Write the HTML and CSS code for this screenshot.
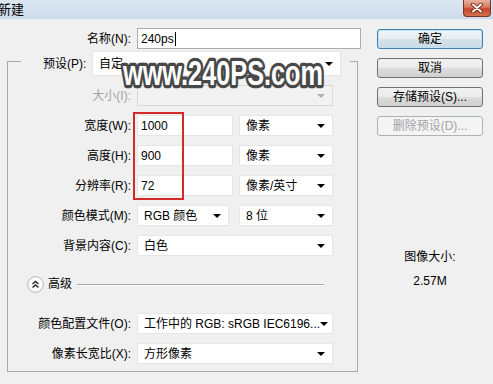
FILE: index.html
```html
<!DOCTYPE html>
<html lang="zh">
<head>
<meta charset="utf-8">
<title>新建</title>
<link rel="stylesheet" href="styles.css">
</head>
<body>
<div class="window">
  <div class="titlebar">
    <span class="title">新建</span>
    <div class="close">
      <svg width="14" height="10" viewBox="0 0 14 10"><path d="M3 1.5 L11 8.5 M11 1.5 L3 8.5" stroke="#5a1a10" stroke-width="3.6" stroke-linecap="round"/><path d="M3 1.5 L11 8.5 M11 1.5 L3 8.5" stroke="#fff" stroke-width="2" stroke-linecap="round"/></svg>
    </div>
  </div>
  <div class="main">
    <div class="left">
      <div class="row name-row">
        <span class="lbl">名称(N):</span>
        <div class="input name">240ps<span class="caret"></span></div>
      </div>
      <div class="group">
        <div class="legend-row">
          <span class="legend-lbl">预设(P):</span>
          <div class="select preset"><span>自定</span><i class="arrow"></i></div>
        </div>
        <div class="row size-row">
          <span class="lbl dis">大小(I):</span>
          <div class="select disabled"><span></span><i class="arrow grey"></i></div>
        </div>
        <div class="row">
          <span class="lbl">宽度(W):</span>
          <div class="pair"><div class="input num">1000</div><div class="select unit"><span>像素</span><i class="arrow"></i></div></div>
        </div>
        <div class="row">
          <span class="lbl">高度(H):</span>
          <div class="pair"><div class="input num">900</div><div class="select unit"><span>像素</span><i class="arrow"></i></div></div>
        </div>
        <div class="row">
          <span class="lbl">分辨率(R):</span>
          <div class="pair"><div class="input num">72</div><div class="select unit"><span>像素/英寸</span><i class="arrow"></i></div></div>
        </div>
        <div class="row">
          <span class="lbl">颜色模式(M):</span>
          <div class="pair"><div class="select mode"><span>RGB 颜色</span><i class="arrow"></i></div><div class="select unit"><span>8 位</span><i class="arrow"></i></div></div>
        </div>
        <div class="row">
          <span class="lbl">背景内容(C):</span>
          <div class="select"><span>白色</span><i class="arrow"></i></div>
        </div>
        <div class="adv">
          <svg class="adv-icon" width="17" height="17" viewBox="0 0 17 17"><circle cx="8.5" cy="8.5" r="7.8" fill="#fafafa" stroke="#b4b4b4"/><path d="M5.5 8 L8.5 5.5 L11.5 8 M5.5 11.5 L8.5 9 L11.5 11.5" fill="none" stroke="#222" stroke-width="1.4"/></svg>
          <span class="adv-txt">高级</span>
          <span class="adv-line"></span>
        </div>
        <div class="row profile-row">
          <span class="lbl">颜色配置文件(O):</span>
          <div class="select"><span>工作中的 RGB: sRGB IEC6196...</span><i class="arrow"></i></div>
        </div>
        <div class="row">
          <span class="lbl">像素长宽比(X):</span>
          <div class="select"><span>方形像素</span><i class="arrow"></i></div>
        </div>
      </div>
    </div>
    <div class="side">
      <div class="btn default">确定</div>
      <div class="btn">取消</div>
      <div class="btn">存储预设(S)...</div>
      <div class="btn disabled">删除预设(D)...</div>
      <div class="info">
        <div>图像大小:</div>
        <div class="info-val">2.57M</div>
      </div>
    </div>
  </div>
  <div class="highlight"></div>
  <svg class="watermark" width="216" height="42" viewBox="0 0 216 42"><text x="7" y="33" textLength="200" lengthAdjust="spacingAndGlyphs">www.240PS.com</text></svg>
</div>
</body>
</html>
```
FILE: styles.css
```css
* { box-sizing: border-box; }
html, body { margin: 0; padding: 0; }
body {
  width: 493px; height: 384px; overflow: hidden;
  background: #f0f0f0;
  font-family: "Liberation Sans", "Noto Sans CJK SC", sans-serif;
  font-size: 12px; line-height: 1; color: #000;
}
.window { position: relative; width: 493px; height: 384px; }

.titlebar {
  height: 20px;
  background: linear-gradient(#dde7f3, #cedbeb);
  border-bottom: 1px solid #e4ebf4;
  display: flex; justify-content: space-between; align-items: flex-start;
}
.title { font-size: 13px; margin: 3px 0 0 -2px; }
.close {
  width: 28px; height: 17px; margin-right: 2px;
  border: 1px solid #7a3427; border-top: none; border-radius: 0 0 4px 4px;
  background: linear-gradient(#eab0a0 0%, #d8775c 45%, #c5472a 55%, #d4704f 100%);
  display: flex; align-items: center; justify-content: center;
}

.main { display: flex; }
.left { width: 351px; margin-left: 7px; padding-top: 8px; }
.side { width: 106px; margin-left: 19px; padding-top: 9px; }

.row {
  display: grid; grid-template-columns: 123px 196px; column-gap: 6px;
  align-items: center; height: 21px; margin-top: 9px;
}
.name-row { grid-template-columns: 124px 224px; margin-top: 0; }
.lbl { text-align: right; white-space: nowrap; }
.lbl.dis { color: #a3a3a3; }

.input {
  height: 21px; background: #fff; border: 1px solid #e6e6e6;
  padding: 0 3px; display: flex; align-items: center;
}
.input.name { border-color: #abadb3; padding-left: 3px; }
.caret { width: 1px; height: 14px; background: #000; margin-left: 1px; }
.select {
  height: 21px; background: #fff; border: 1px solid #e6e6e6;
  padding: 0 7px 0 6px; display: flex; align-items: center; justify-content: space-between;
  white-space: nowrap;
}
.select.disabled { background: #f2f2f2; border-color: #d9d9d9; }
.arrow {
  display: block; width: 0; height: 0;
  border-left: 4px solid transparent; border-right: 4px solid transparent;
  border-top: 4px solid #000;
}
.arrow.grey { border-top-color: #b0b0b0; }

.pair { display: flex; justify-content: space-between; }
.input.num { width: 96px; }
.select.unit { width: 94px; }
.select.mode { width: 92px; }

.group {
  margin-top: 12px; height: 311px;
  border: 1px solid #a9a9a9;
}
.legend-row {
  margin: -11px 0 0 13px; width: 329px; height: 25px;
  background: #f0f0f0; display: flex; align-items: center;
  padding-left: 22px;
}
.legend-lbl { width: 49px; }
.select.preset { width: 249px; height: 25px; }
.size-row { margin-top: 9px; }

.adv {
  display: flex; align-items: center; height: 18px;
  margin-top: 19px; padding-left: 19px;
}
.adv-icon { flex: none; }
.adv-txt { margin-left: 4px; width: 24px; }
.adv-line {
  margin-left: 5px; width: 247px; height: 2px;
  border-top: 1px solid #a9a9a9; border-bottom: 1px solid #fff; margin-top: 2px;
}
.profile-row { margin-top: 20px; }

.btn {
  height: 20px; margin-bottom: 9px;
  border: 1px solid #707070; border-radius: 3px;
  background: linear-gradient(#f2f2f2 0%, #ebebeb 50%, #dddddd 51%, #cfcfcf 100%);
  text-align: center; line-height: 18px; white-space: nowrap;
}
.btn.default {
  border-color: #3c7fb1;
  box-shadow: inset 0 0 0 1px #bfe3f8;
  background: linear-gradient(#f0f5f8 0%, #e6eef3 50%, #d6e2ea 51%, #cbd9e3 100%);
}
.btn.disabled { border-color: #adb2b5; color: #a3a3a3; background: #f4f4f4; }

.info { margin-top: 115px; text-align: center; }
.info-val { margin-top: 12px; }

.highlight {
  position: absolute; left: 133px; top: 112px; width: 51px; height: 88px;
  border: 2px solid #d42a2a;
}
.watermark { position: absolute; left: 116px; top: 52px; }
.watermark text {
  font-family: "Liberation Sans", sans-serif; font-weight: bold; font-size: 35px;
  fill: #fff; stroke: #484848; stroke-width: 6.5px; stroke-linejoin: round;
  paint-order: stroke;
}
```
